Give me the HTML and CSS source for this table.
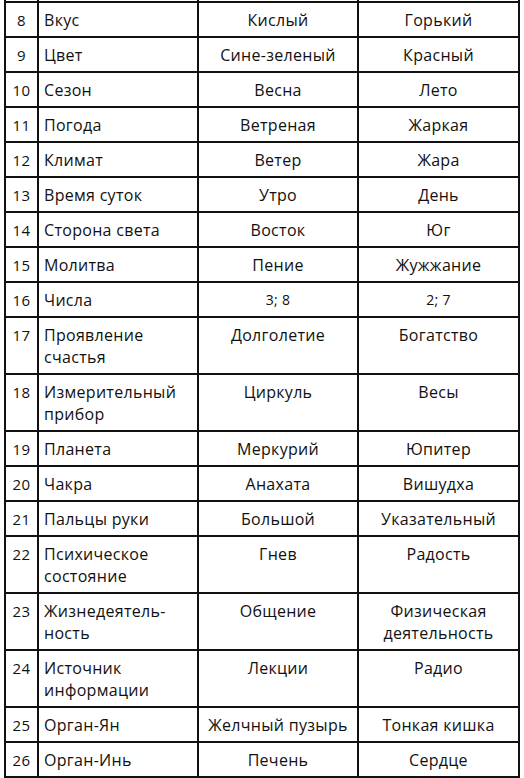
FILE: index.html
```html
<!DOCTYPE html>
<html lang="ru">
<head>
<meta charset="utf-8">
<link rel="stylesheet" href="styles.css">
</head>
<body>
<table class="grid">
  <colgroup>
    <col class="c-num"><col class="c-prop"><col class="c-val"><col class="c-val2">
  </colgroup>
  <tbody>
    <tr class="stub"><td></td><td></td><td></td><td></td></tr>
    <tr><td class="num">8</td><td class="prop">Вкус</td><td class="val">Кислый</td><td class="val">Горький</td></tr>
    <tr><td class="num">9</td><td class="prop">Цвет</td><td class="val">Сине-зеленый</td><td class="val">Красный</td></tr>
    <tr><td class="num">10</td><td class="prop">Сезон</td><td class="val">Весна</td><td class="val">Лето</td></tr>
    <tr><td class="num">11</td><td class="prop">Погода</td><td class="val">Ветреная</td><td class="val">Жаркая</td></tr>
    <tr><td class="num">12</td><td class="prop">Климат</td><td class="val">Ветер</td><td class="val">Жара</td></tr>
    <tr><td class="num">13</td><td class="prop">Время суток</td><td class="val">Утро</td><td class="val">День</td></tr>
    <tr><td class="num">14</td><td class="prop">Сторона света</td><td class="val">Восток</td><td class="val">Юг</td></tr>
    <tr><td class="num">15</td><td class="prop">Молитва</td><td class="val">Пение</td><td class="val">Жужжание</td></tr>
    <tr><td class="num">16</td><td class="prop">Числа</td><td class="val digits">3; 8</td><td class="val digits">2; 7</td></tr>
    <tr><td class="num">17</td><td class="prop">Проявление<br>счастья</td><td class="val">Долголетие</td><td class="val">Богатство</td></tr>
    <tr><td class="num">18</td><td class="prop">Измерительный<br>прибор</td><td class="val">Циркуль</td><td class="val">Весы</td></tr>
    <tr><td class="num">19</td><td class="prop">Планета</td><td class="val">Меркурий</td><td class="val">Юпитер</td></tr>
    <tr><td class="num">20</td><td class="prop">Чакра</td><td class="val">Анахата</td><td class="val">Вишудха</td></tr>
    <tr><td class="num">21</td><td class="prop">Пальцы руки</td><td class="val">Большой</td><td class="val">Указательный</td></tr>
    <tr><td class="num">22</td><td class="prop">Психическое<br>состояние</td><td class="val">Гнев</td><td class="val">Радость</td></tr>
    <tr><td class="num">23</td><td class="prop">Жизнедеятель-<br>ность</td><td class="val">Общение</td><td class="val">Физическая<br>деятельность</td></tr>
    <tr><td class="num">24</td><td class="prop">Источник<br>информации</td><td class="val">Лекции</td><td class="val">Радио</td></tr>
    <tr><td class="num">25</td><td class="prop">Орган-Ян</td><td class="val">Желчный пузырь</td><td class="val">Тонкая кишка</td></tr>
    <tr><td class="num">26</td><td class="prop">Орган-Инь</td><td class="val">Печень</td><td class="val">Сердце</td></tr>
  </tbody>
</table>
</body>
</html>
```
FILE: styles.css
```css
html, body {
  margin: 0;
  padding: 0;
  background: #ffffff;
}

body {
  font-family: "Open Sans", "Noto Sans", sans-serif;
  font-size: 16px;
  color: #111111;
}

.grid {
  border-collapse: collapse;
  margin-left: 4px;
  table-layout: fixed;
  width: 516px;
}

.c-num { width: 33px; }
.c-prop { width: 160px; }
.c-val { width: 160px; }
.c-val2 { width: 161px; }

.grid td {
  border: 2px solid #111111;
  padding: 6px 5px 5px 5px;
  line-height: 22px;
  vertical-align: top;
  white-space: nowrap;
  letter-spacing: 0.3px;
}

.grid .stub td {
  border-top: none;
  height: 1px;
  padding: 0;
  line-height: 0;
}

.num {
  text-align: center;
  font-size: 15px;
}

.prop {
  text-align: left;
}

.val {
  text-align: center;
}

.digits {
  font-size: 14px;
}
```
